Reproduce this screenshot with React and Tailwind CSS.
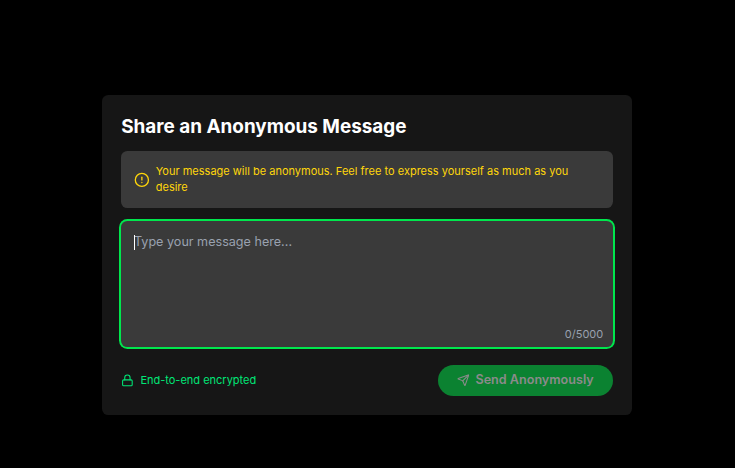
import { CircleAlert, Lock, Send } from "lucide-react";

export default function App() {
  return (
    <main className="flex h-screen flex-col items-center bg-black pt-[95px] font-['Inter','Liberation_Sans',sans-serif]">
      <section className="mr-px flex h-80 w-[530px] flex-col rounded-[6.4px] bg-[#161616] px-[19.2px] pt-[19px]">
        <h1 className="text-[18.9px] leading-[25px] font-bold text-white">Share an Anonymous Message</h1>
        <div className="mt-3 flex h-[57px] items-center gap-[6px] rounded-[6.4px] bg-[#3a3a3a] px-[12.8px] text-[#ffd60a]">
          <CircleAlert className="mt-px size-[15.75px] shrink-0" />
          <p className="-mt-0.5 text-[11px] leading-4 tracking-[0.005px]">
            Your message will be anonymous. Feel free to express yourself as much as you desire
          </p>
        </div>
        <div className="relative mt-[13px] h-[126px]">
          <textarea
            placeholder="Type your message here..."
            className="block h-full w-full resize-none rounded-[6.4px] bg-[#3a3a3a] px-[12.8px] py-[11px] text-[12.6px] leading-[19px] text-white ring-2 ring-[#00e64d] outline-none placeholder:text-[#99a1af]"
          />
          <span className="absolute top-[14px] left-[12.8px] h-[15px] w-px bg-white" />
          <span className="absolute right-[9.6px] bottom-[5px] text-[11px] leading-4 text-[#99a1af]">0/5000</span>
        </div>
        <div className="mt-[18px] flex items-center justify-between">
          <div className="flex items-center gap-[6.4px] text-[11px] leading-4 text-[#00e676]">
            <Lock className="size-[12.8px]" />
            <span className="-mt-px">End-to-end encrypted</span>
          </div>
          <button disabled className="flex h-[31px] w-[175px] items-center justify-center gap-[6px] rounded-full bg-[#0b8231] text-[12.6px] leading-[19px] font-semibold text-[#8b8b8b]">
            <Send className="size-[12.6px]" />
            <span className="-mt-0.5">Send Anonymously</span>
          </button>
        </div>
      </section>
    </main>
  );
}
